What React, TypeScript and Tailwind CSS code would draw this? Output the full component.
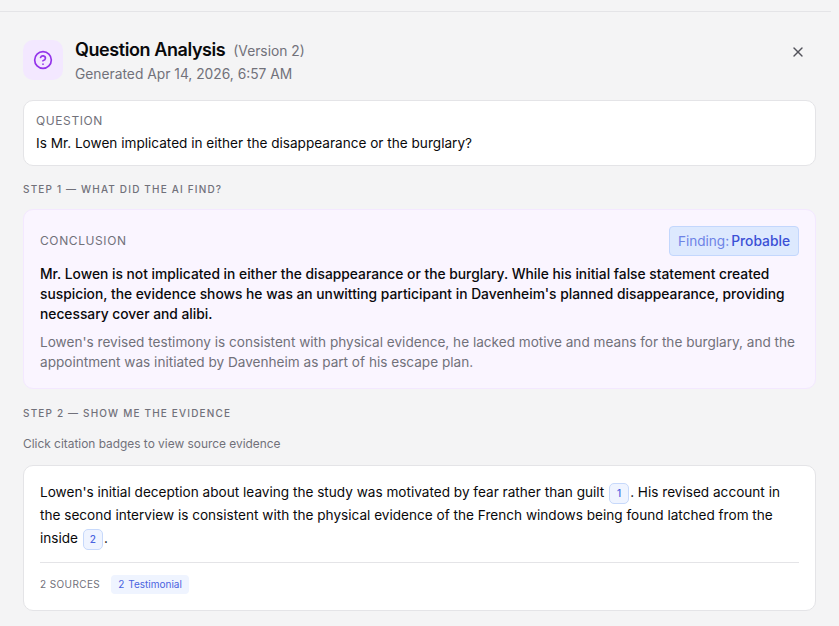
import { X } from 'lucide-react';

function SectionLabel({ children }: { children: React.ReactNode }) {
    return <div className="text-[10px] leading-[14px] font-medium tracking-[1.17px] text-[#71717a] uppercase">{children}</div>;
}

function Cite({ n }: { n: number }) {
    return (
        <span className="inline-flex items-center justify-center w-5 h-[21px] -my-1 mx-[1px] align-middle rounded-[5px] border border-[#c7d9fb] bg-[#eff4ff] text-[10px] font-medium text-[#4a63e0]">
            {n}
        </span>
    );
}

export default function App() {
    return (
        <div className="w-[839px] h-[626px] overflow-hidden bg-[#f4f4f5] text-[13.6px] text-[#09090b] font-['Inter',sans-serif]">
            <div className="mt-[11px] mr-2 h-px bg-[#e4e4e7]" />
            <div className="px-[23px] pt-[28px] w-[839px]">
                <div className="flex items-start gap-3 h-[40px]">
                    <div className="w-10 h-10 rounded-[10px] bg-[#f3e8ff] flex items-center justify-center">
                        <svg width="20" height="20" viewBox="0 0 24 24" fill="none" stroke="#9333ea" strokeWidth="2" strokeLinecap="round" strokeLinejoin="round">
                            <circle cx="12" cy="12" r="10" />
                            <path d="M9.09 9a3 3 0 0 1 5.83 1c0 2-3 3-3 3" />
                            <path d="M12 17h.01" />
                        </svg>
                    </div>
                    <div className="flex-1 -mt-[2px]">
                        <div className="flex items-baseline gap-2">
                            <span className="text-[18px] leading-[24px] font-semibold tracking-[-0.42px]">Question Analysis</span>
                            <span className="text-[13.8px] text-[#71717a]">(Version 2)</span>
                        </div>
                        <div className="text-[13.8px] leading-[20px] mt-[2px] text-[#71717a]">Generated Apr 14, 2026, 6:57 AM</div>
                    </div>
                    <button className="mt-[4px] mr-[10px] text-[#52525b]">
                        <X size={16} />
                    </button>
                </div>

                <div className="mt-5 h-[66px] rounded-[10px] border border-[#e4e4e7] bg-white px-3 pt-3">
                    <div className="text-[12px] leading-[16px] tracking-[0.6px] text-[#71717a] uppercase">Question</div>
                    <div className="mt-[4px] leading-[20px]">Is Mr. Lowen implicated in either the disappearance or the burglary?</div>
                </div>

                <div className="mt-4">
                    <SectionLabel>Step 1 — What did the AI find?</SectionLabel>
                </div>

                <div className="mt-[13px] h-[180px] rounded-[10px] border border-[#f3e8ff] bg-[#faf5ff] px-4 pt-4">
                    <div className="flex items-center justify-between h-[30px]">
                        <span className="text-[12px] tracking-[0.6px] text-[#71717a] uppercase">Conclusion</span>
                        <span className="flex items-center gap-[2px] h-[30px] px-2 rounded-[4px] border border-[#c3d7fd] bg-[#dde9fe]">
                            <span className="text-[#6d83e6]">Finding:</span>
                            <span className="text-[13.8px] font-medium text-[#3b50d6]">Probable</span>
                        </span>
                    </div>
                    <p className="mt-2 text-[13.8px] leading-[20px] font-medium text-[#09090b]">
                        Mr. Lowen is not implicated in either the disappearance or the burglary. While his initial false statement created suspicion, the evidence shows he was an unwitting participant in Davenheim's planned disappearance, providing necessary cover and alibi.
                    </p>
                    <p className="mt-2 leading-[20px] text-[#71717a]">
                        Lowen's revised testimony is consistent with physical evidence, he lacked motive and means for the burglary, and the appointment was initiated by Davenheim as part of his escape plan.
                    </p>
                </div>

                <div className="mt-[17px]">
                    <SectionLabel>Step 2 — Show me the evidence</SectionLabel>
                </div>

                <div className="mt-[16px] text-[11.9px] leading-[16px] text-[#71717a]">Click citation badges to view source evidence</div>

                <div className="mt-[13px] h-[146px] rounded-[10px] border border-[#e4e4e7] bg-white px-4 pt-[15px]">
                    <p className="leading-[23px]">
                        Lowen's initial deception about leaving the study was motivated by fear rather than guilt <Cite n={1} />. His revised account in the second interview is consistent with the physical evidence of the French windows being found latched from the inside <Cite n={2} />.
                    </p>
                    <div className="mt-[12px] pt-3 border-t border-[#e4e4e7] flex items-center gap-[11px]">
                        <span className="text-[10px] tracking-[0.4px] text-[#71717a] uppercase">2 sources</span>
                        <span className="flex items-center gap-1 h-[19px] px-[7px] rounded-[4px] bg-[#eff4ff] text-[10px] text-[#4a63e0]">
                            <span>2</span>
                            <span>Testimonial</span>
                        </span>
                    </div>
                </div>
            </div>
        </div>
    );
}
